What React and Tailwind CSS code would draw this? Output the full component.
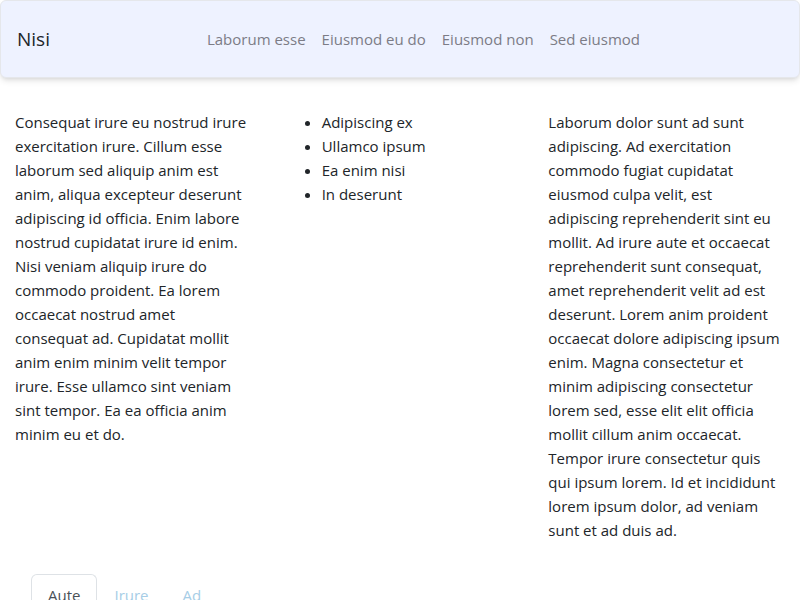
const links = ['Laborum esse', 'Eiusmod eu do', 'Eiusmod non', 'Sed eiusmod'];
const items = ['Adipiscing ex', 'Ullamco ipsum', 'Ea enim nisi', 'In deserunt'];

export default function App() {
  return (
    <div className="min-h-screen bg-white text-[#212529] text-[15px] leading-6 font-['Open_Sans',sans-serif]">
      <nav className="flex items-center px-4 py-6 bg-[#eef2ff] border border-gray-200 rounded-md shadow-md">
        <span className="text-[19px] leading-7">Nisi</span>
        <ul className="flex gap-4 ml-[157px]">
          {links.map((l) => (
            <li key={l}>
              <a href="#" className="text-[#7c7c86]">{l}</a>
            </li>
          ))}
        </ul>
      </nav>

      <div className="grid grid-cols-3 mt-8">
        <div className="pl-[15px] pr-[17px]">
          <p>
            Consequat irure eu nostrud irure exercitation irure. Cillum esse laborum sed aliquip anim est anim, aliqua
            excepteur deserunt adipiscing id officia. Enim labore nostrud cupidatat irure id enim. Nisi veniam aliquip
            irure do commodo proident. Ea lorem occaecat nostrud amet consequat ad. Cupidatat mollit anim enim minim
            velit tempor irure. Esse ullamco sint veniam sint tempor. Ea ea officia anim minim eu et do.
          </p>
        </div>
        <div className="pl-[15px] pr-[17px]">
          <ul className="list-disc pl-10">
            {items.map((i) => (
              <li key={i}>{i}</li>
            ))}
          </ul>
        </div>
        <div className="pl-[15px] pr-[17px]">
          <p>
            Laborum dolor sunt ad sunt adipiscing. Ad exercitation commodo fugiat cupidatat eiusmod culpa velit, est
            adipiscing reprehenderit sint eu mollit. Ad irure aute et occaecat reprehenderit sunt consequat, amet
            reprehenderit velit ad est deserunt. Lorem anim proident occaecat dolore adipiscing ipsum enim. Magna
            consectetur et minim adipiscing consectetur lorem sed, esse elit elit officia mollit cillum anim occaecat.
            Tempor irure consectetur quis qui ipsum lorem. Id et incididunt lorem ipsum dolor, ad veniam sunt et ad duis
            ad.
          </p>
        </div>
      </div>

      <div className="mt-8 pl-[31px] pr-4">
        <ul className="flex">
          <li>
            <a href="#" className="block px-4 py-2 border border-[#dee2e6] border-b-0 rounded-t-md text-[#495057]">
              Aute
            </a>
          </li>
          <li>
            <a href="#" className="block px-4 py-2 border border-transparent text-[#a6cde6]">
              Irure
            </a>
          </li>
          <li>
            <a href="#" className="block px-4 py-2 border border-transparent text-[#a6cde6]">
              Ad
            </a>
          </li>
        </ul>
      </div>
    </div>
  );
}
